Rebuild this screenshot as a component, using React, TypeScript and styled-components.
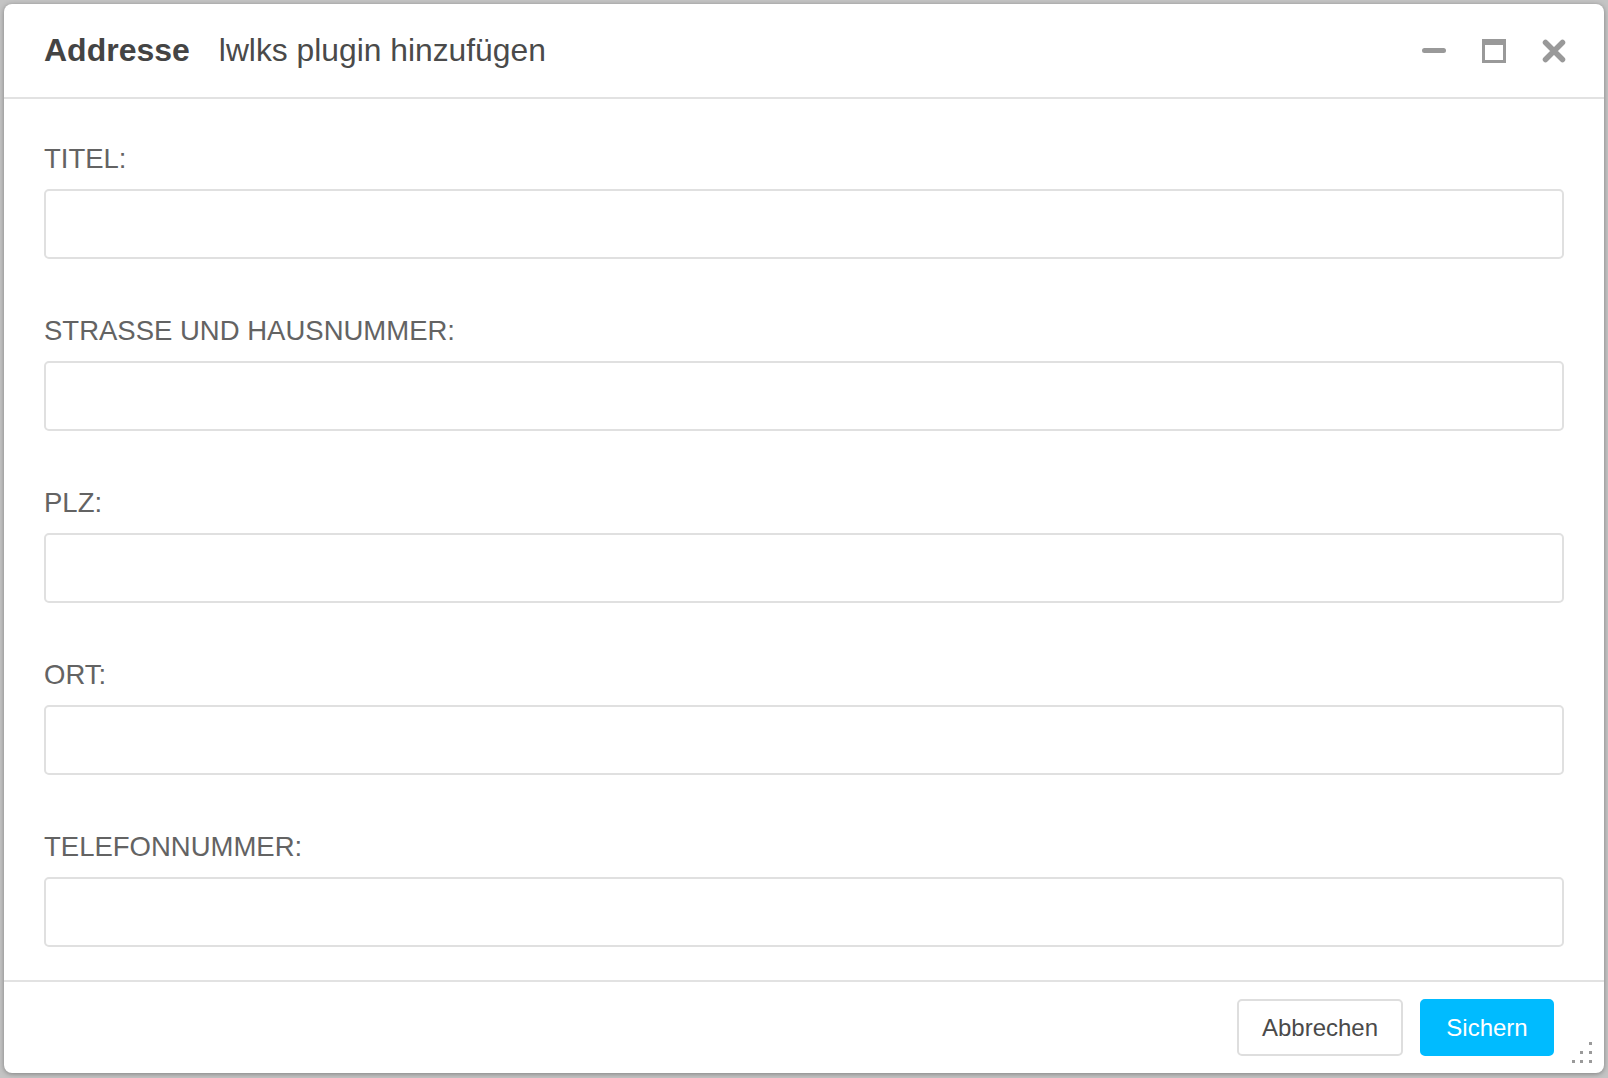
import styled, { createGlobalStyle } from "styled-components";

const GlobalStyle = createGlobalStyle`
  html, body {
    margin: 0;
    padding: 0;
    background: #c4c4c4;
  }
  body {
    font-family: "Liberation Sans", Arial, Helvetica, sans-serif;
  }
  * {
    box-sizing: border-box;
  }
`;

const Page = styled.div`
  padding: 4px;
  height: 1078px;
`;

const Dialog = styled.div`
  position: relative;
  width: 1600px;
  height: 1069px;
  background: #fff;
  border-radius: 8px;
  box-shadow: 0 1px 5px rgba(0, 0, 0, 0.35);
  display: flex;
  flex-direction: column;
  overflow: hidden;
`;

const Header = styled.div`
  height: 95px;
  flex: none;
  display: flex;
  align-items: center;
  padding: 0 38px 0 40px;
  border-bottom: 2px solid #e2e2e2;
`;

const Title = styled.h1`
  margin: 0;
  font-size: 32px;
  font-weight: 700;
  color: #444;
`;

const Subtitle = styled.span`
  margin-left: 29px;
  font-size: 31.8px;
  color: #4a4a4a;
`;

const Controls = styled.div`
  margin-left: auto;
  display: flex;
  align-items: center;
  gap: 36px;
`;

const IconButton = styled.button`
  width: 24px;
  height: 24px;
  padding: 0;
  border: none;
  background: none;
  display: flex;
  align-items: center;
  justify-content: center;
  cursor: pointer;
  svg {
    display: block;
  }
`;

const Body = styled.div`
  flex: none;
  display: flex;
  flex-direction: column;
  gap: 56px;
  padding: 44px 40px 33px;
`;

const Field = styled.div`
  display: flex;
  flex-direction: column;
  gap: 14px;
`;

const Label = styled.label`
  font-size: 27.5px;
  line-height: 32px;
  color: #636363;
`;

const Input = styled.input`
  height: 70px;
  width: 100%;
  border: 2px solid #e0e0e0;
  border-radius: 5px;
  padding: 0 16px;
  font-family: inherit;
  font-size: 26px;
  color: #444;
  outline: none;
`;

const Footer = styled.div`
  flex: 1;
  display: flex;
  align-items: flex-start;
  justify-content: flex-end;
  gap: 17px;
  padding: 17px 50px 0 0;
  border-top: 2px solid #e2e2e2;
`;

const Button = styled.button<{ $primary?: boolean }>`
  height: 57px;
  padding: 0;
  width: ${(p) => (p.$primary ? "134px" : "166px")};
  border-radius: 5px;
  font-family: inherit;
  font-size: 24px;
  cursor: pointer;
  border: 2px solid ${(p) => (p.$primary ? "#00bbff" : "#dedede")};
  background: ${(p) => (p.$primary ? "#00bbff" : "#fff")};
  color: ${(p) => (p.$primary ? "#fff" : "#4a4a4a")};
`;

const Grip = styled.div`
  position: absolute;
  right: 10px;
  bottom: 9px;
  width: 22px;
  height: 22px;
`;

const fields = ["TITEL:", "STRASSE UND HAUSNUMMER:", "PLZ:", "ORT:", "TELEFONNUMMER:"];

function App() {
  return (
    <>
      <GlobalStyle />
      <Page>
        <Dialog>
          <Header>
            <Title>Addresse</Title>
            <Subtitle>lwlks plugin hinzufügen</Subtitle>
            <Controls>
              <IconButton aria-label="minimieren">
                <svg width="24" height="24" viewBox="0 0 24 24">
                  <line x1="2.5" y1="11.5" x2="21.5" y2="11.5" stroke="#999" strokeWidth="5" strokeLinecap="round" />
                </svg>
              </IconButton>
              <IconButton aria-label="maximieren">
                <svg width="24" height="24" viewBox="0 0 24 24">
                  <rect x="1.5" y="1.5" width="21" height="21" fill="none" stroke="#999" strokeWidth="3" />
                  <rect x="1" y="1" width="22" height="5" fill="#999" />
                </svg>
              </IconButton>
              <IconButton aria-label="schließen">
                <svg width="24" height="24" viewBox="0 0 24 24">
                  <path d="M3.5 3.5 L20.5 20.5 M20.5 3.5 L3.5 20.5" stroke="#999" strokeWidth="5.5" strokeLinecap="round" />
                </svg>
              </IconButton>
            </Controls>
          </Header>
          <Body>
            {fields.map((f) => (
              <Field key={f}>
                <Label>{f}</Label>
                <Input type="text" />
              </Field>
            ))}
          </Body>
          <Footer>
            <Button>Abbrechen</Button>
            <Button $primary>Sichern</Button>
          </Footer>
          <Grip>
            <svg width="22" height="22" viewBox="0 0 22 22">
              <rect x="17" y="0" width="3" height="3" fill="#9a9a9a" />
              <rect x="8" y="9" width="3" height="3" fill="#9a9a9a" />
              <rect x="17" y="9" width="3" height="3" fill="#9a9a9a" />
              <rect x="0" y="18" width="3" height="3" fill="#9a9a9a" />
              <rect x="8" y="18" width="3" height="3" fill="#9a9a9a" />
              <rect x="17" y="18" width="3" height="3" fill="#9a9a9a" />
            </svg>
          </Grip>
        </Dialog>
      </Page>
    </>
  );
}

export default App;
